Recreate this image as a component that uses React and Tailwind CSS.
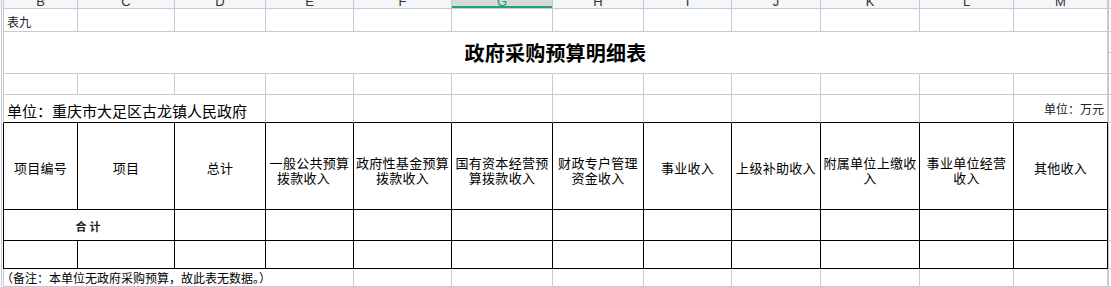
import React from 'react';

// grid line colours
const g = 'border-[#c6cad6]';
const k = 'border-black';

const letters = [
  { l: 'B', w: 'w-[75px] border-l' },
  { l: 'C', w: 'w-[97px]' },
  { l: 'D', w: 'w-[91px]' },
  { l: 'E', w: 'w-[88px]' },
  { l: 'F', w: 'w-[98px]' },
  { l: 'G', w: 'w-[101px]', on: true },
  { l: 'H', w: 'w-[91px]' },
  { l: 'I', w: 'w-[88px]' },
  { l: 'J', w: 'w-[89px]' },
  { l: 'K', w: 'w-[99px]' },
  { l: 'L', w: 'w-[94px]' },
  { l: 'M', w: 'w-[94px]' },
];

const heads = [
  { w: 'w-[75px] border-l', lines: ['项目编号'] },
  { w: 'w-[97px]', lines: ['项目'] },
  { w: 'w-[91px]', lines: ['总计'] },
  { w: 'w-[88px]', lines: ['一般公共预算', '拨款收入'], pad: 'pr-[12px]' },
  { w: 'w-[98px]', lines: ['政府性基金预算', '拨款收入'] },
  { w: 'w-[101px]', lines: ['国有资本经营预', '算拨款收入'] },
  { w: 'w-[91px]', lines: ['财政专户管理', '资金收入'] },
  { w: 'w-[88px]', lines: ['事业收入'] },
  { w: 'w-[89px]', lines: ['上级补助收入'] },
  { w: 'w-[99px]', lines: ['附属单位上缴收', '入'] },
  { w: 'w-[94px]', lines: ['事业单位经营', '收入'] },
  { w: 'w-[94px]', lines: ['其他收入'] },
];

const rest = ['w-[91px]', 'w-[88px]', 'w-[98px]', 'w-[101px]', 'w-[91px]', 'w-[88px]', 'w-[89px]', 'w-[99px]', 'w-[94px]', 'w-[94px]'];

const Strip = ({ bg }) => (
  <div className={`w-[3px] shrink-0 flex ${bg || ''}`}>
    <div className={`w-[2px] border-r ${g}`} />
  </div>
);

const Tail = ({ cls = '' }) => <div className={`flex-1 border-l border-b ${g} ${cls}`} />;

export default function App() {
  return (
    <div className="w-[1111px] h-[287px] overflow-hidden bg-white text-black font-['Noto_Sans_CJK_SC',sans-serif]">
      {/* column letters */}
      <div className="flex h-[9px]">
        <Strip bg="bg-[#f5f6f8]" />
        {letters.map((c) => (
          <div
            key={c.l}
            className={`${c.w} shrink-0 relative flex justify-center items-end overflow-hidden border-r border-b ${g} ${c.on ? 'bg-[#d6d9e0]' : 'bg-[#f5f6f8]'}`}
          >
            <span className={`text-[13px] leading-[13px] font-['Liberation_Sans',sans-serif] ${c.on ? 'text-[#1f9a5d]' : 'text-[#333]'}`}>
              {c.l}
            </span>
            {c.on && <div className="absolute left-0 right-0 bottom-0 h-[2px] bg-[#21a564]" />}
          </div>
        ))}
        <Tail cls="bg-[#f5f6f8]" />
      </div>

      {/* 表九 */}
      <div className="flex h-[23px]">
        <Strip />
        {letters.map((c, i) => (
          <div key={c.l} className={`${c.w} shrink-0 flex items-center pl-[3px] pt-[3px] border-r border-b ${g}`}>
            {i === 0 && <span className="text-[12px] leading-[16px] text-[#222]">表九</span>}
          </div>
        ))}
        <Tail />
      </div>

      {/* title */}
      <div className="flex h-[42px]">
        <Strip />
        <div className={`w-[1105px] shrink-0 flex items-center justify-center border-l border-r border-b ${g}`}>
          <span className="text-[20px] leading-[24px] font-bold tracking-[0.2px]">政府采购预算明细表</span>
        </div>
        <div className="flex-1 flex flex-col">
          <div className={`h-[21px] border-l border-b ${g}`} />
          <div className={`flex-1 border-l border-b ${g}`} />
        </div>
      </div>

      {/* blank */}
      <div className="flex h-[21px]">
        <Strip />
        {letters.map((c) => (
          <div key={c.l} className={`${c.w} shrink-0 border-r border-b ${g}`} />
        ))}
        <Tail />
      </div>

      {/* unit row */}
      <div className="flex h-[28px]">
        <Strip />
        <div className={`w-[263px] shrink-0 flex items-end pl-[3px] pb-[1px] border-l border-r ${g} border-b-black border-b`}>
          <span className="text-[15px] leading-[20px] whitespace-nowrap">单位：重庆市大足区古龙镇人民政府</span>
        </div>
        {rest.slice(1, 9).map((w, i) => (
          <div key={i} className={`${w} shrink-0 border-r ${g} border-b border-b-black`} />
        ))}
        <div className={`w-[94px] shrink-0 flex items-end justify-end pr-[3px] pb-[5px] border-r ${g} border-b border-b-black`}>
          <span className="text-[12px] leading-[16px] text-[#222] whitespace-nowrap">单位：万元</span>
        </div>
        <Tail />
      </div>

      {/* table head */}
      <div className="flex h-[87px]">
        <Strip />
        {heads.map((h, i) => (
          <div
            key={i}
            className={`${h.w} shrink-0 flex flex-col items-center justify-center border-r border-b ${k} text-[13px] ${h.lines.length > 1 ? 'pt-[7px] leading-[15px]' : 'pt-[3px] leading-[16px]'}`}
          >
            {h.lines.map((t, j) => (
              <div key={j} className={`whitespace-nowrap tracking-[0.3px] ${j === 1 && h.pad ? h.pad : ''}`}>
                {t}
              </div>
            ))}
          </div>
        ))}
        <Tail />
      </div>

      {/* 合计 */}
      <div className="flex h-[31px]">
        <Strip />
        <div className={`w-[172px] shrink-0 flex items-center justify-center pt-[2px] border-l border-r border-b ${k}`}>
          <span className="text-[11px] leading-[14px] font-bold tracking-[3px] pl-[1px] text-[#222]">合计</span>
        </div>
        {rest.map((w, i) => (
          <div key={i} className={`${w} shrink-0 border-r border-b ${k}`} />
        ))}
        <Tail />
      </div>

      {/* empty table row */}
      <div className="flex h-[28px]">
        <Strip />
        <div className={`w-[75px] shrink-0 border-l border-r border-b ${k}`} />
        <div className={`w-[97px] shrink-0 border-r border-b ${k}`} />
        {rest.map((w, i) => (
          <div key={i} className={`${w} shrink-0 border-r border-b ${k}`} />
        ))}
        <Tail />
      </div>

      {/* note */}
      <div className="flex h-[18px]">
        <Strip />
        <div className={`w-[351px] shrink-0 flex items-center border-l border-r border-b ${g}`}>
          <span className="-ml-[3px] text-[12px] leading-[16px] whitespace-nowrap">（备注：本单位无政府采购预算，故此表无数据。）</span>
        </div>
        {rest.slice(2).map((w, i) => (
          <div key={i} className={`${w} shrink-0 border-r border-b ${g}`} />
        ))}
        <Tail />
      </div>
    </div>
  );
}
